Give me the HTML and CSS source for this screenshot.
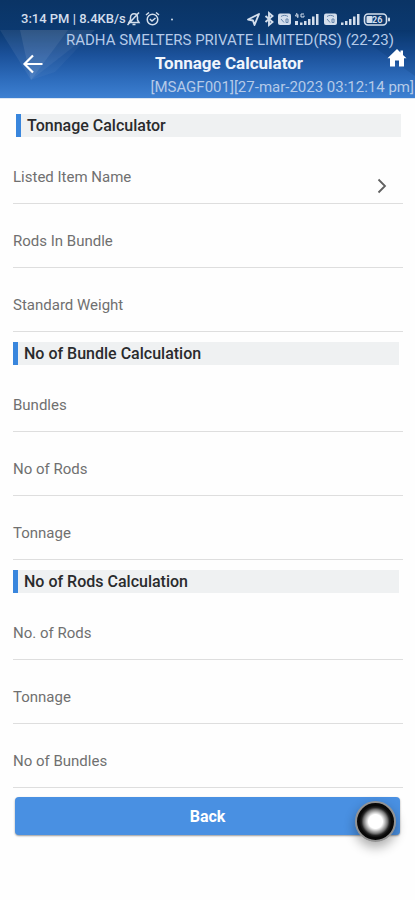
FILE: index.html
```html
<!DOCTYPE html>
<html lang="en">
<head>
<meta charset="utf-8">
<meta name="viewport" content="width=device-width, initial-scale=1">
<title>Tonnage Calculator</title>
<link rel="stylesheet" href="styles.css">
</head>
<body>
<header class="header">
  <svg class="facets" viewBox="0 0 415 68" preserveAspectRatio="none" aria-hidden="true">
    <path d="M0 0H68L31 50Z" fill="#fff" opacity=".07"/>
    <path d="M20 0H95L31 50Z" fill="#fff" opacity=".09"/>
    <path d="M31 50L95 0L55 42Z" fill="#fff" opacity=".04"/>
    <path d="M350 0H415V46Z" fill="#03295c" opacity=".14"/>
  </svg>
  <div class="status">
    <span class="status-text">3:14 PM | 8.4KB/s</span>
    <svg class="icon-alerts" width="50" height="16" viewBox="0 0 50 16" fill="none" stroke="currentColor" stroke-width="1.5" aria-hidden="true">
      <path d="M3 11.500L4.500 9V6.500C4.500 4 6 2.800 8 2.800S11.500 4 11.500 6.500V9L13 11.500ZM6.500 13.500H9.500M1.500 14L13 1.500"/>
      <circle cx="26.500" cy="8.500" r="5.300"/>
      <path d="M20 4L23 1.500M33 4L30 1.500M23.800 8L26 10L29.500 7"/>
      <circle cx="46" cy="8.500" r="1" fill="currentColor" stroke="none"/>
    </svg>
    <svg class="icon-system" width="150" height="18" viewBox="0 0 150 18" fill="currentColor" aria-hidden="true">
      <path d="M3 9.500L14 4L9.500 15L8 10.500Z" fill="none" stroke="currentColor" stroke-width="1.900" stroke-linejoin="round"/>
      <path d="M20.500 6L27.500 12L24 15V3L27.500 6L20.500 12" fill="none" stroke="currentColor" stroke-width="1.900"/>
      <rect x="33" y="3.500" width="13" height="11.500" rx="2"/>
      <path d="M36 6.500C38 5 41 5 43 6.500M36 9L39 12.500M41 9H43V12.500H41Z" fill="none" stroke="#6484aa"/>
      <path d="M52 3L50.500 6H53.500M52.800 4V8M59 4H56V7H59V5.500" fill="none" stroke="currentColor"/>
      <path d="M50 11H53V15H50ZM55 12.500H57.500V15H55ZM59 11H61.500V15H59ZM63 9H65.500V15H63ZM67 6.500H69.500V15H67ZM71 4H73.500V15H71Z"/>
      <rect x="79" y="3.500" width="13" height="11.500" rx="2"/>
      <path d="M82 6.500C84 5 87 5 89 6.500M82 9L85 12.500M87 9H89V12.500H87Z" fill="none" stroke="#6484aa"/>
      <path d="M96 12.500H98.500V15H96ZM100 11H102.500V15H100ZM104 9H106.500V15H104ZM108 6.500H110.500V15H108ZM112 4H114.500V15H112Z"/>
      <rect x="119.500" y="4" width="22" height="11" rx="3.500" fill="none" stroke="currentColor" stroke-width="1.600"/>
      <rect x="121.500" y="6" width="6" height="7" rx="1"/>
      <rect x="143" y="7.500" width="2" height="4" rx="1"/>
      <text x="127" y="12.500" class="battery-text">26</text>
    </svg>
  </div>
  <div class="titles">
    <p class="company">RADHA SMELTERS PRIVATE LIMITED(RS) (22-23)</p>
    <h1 class="title">Tonnage Calculator</h1>
    <p class="session">[MSAGF001][27-mar-2023 03:12:14 pm]</p>
  </div>
  <button class="nav-back" type="button" aria-label="Go back">
    <svg width="22" height="22" viewBox="0 0 22 22" fill="none" stroke="currentColor" stroke-width="2.200"><path d="M20.500 11H3M11 2.500L2.500 11L11 19.500"/></svg>
  </button>
  <a class="nav-home" href="#" aria-label="Home">
    <svg width="20" height="18" viewBox="0 0 20 18" fill="currentColor"><path d="M10 0L0.500 9.300H3V17.500H8V11.500H12V17.500H17V9.300H19.500L16 5.900V1.500H13.500V3.400Z"/></svg>
  </a>
</header>
<main class="main">
  <form class="form">
    <h2 class="section">Tonnage Calculator</h2>
    <div class="field">
      <label for="item">Listed Item Name</label><input id="item" type="text">
      <button class="pick" type="button" aria-label="Choose item">
        <svg width="10" height="16" viewBox="0 0 10 16" fill="none" stroke="currentColor" stroke-width="1.800"><path d="M1.500 1.500L8 8L1.500 14.500"/></svg>
      </button>
    </div>
    <div class="field"><label for="rods-in">Rods In Bundle</label><input id="rods-in" type="text"></div>
    <div class="field"><label for="weight">Standard Weight</label><input id="weight" type="text"></div>
    <h2 class="section">No of Bundle Calculation</h2>
    <div class="field"><label for="bundles">Bundles</label><input id="bundles" type="text"></div>
    <div class="field"><label for="rods">No of Rods</label><input id="rods" type="text"></div>
    <div class="field"><label for="tonnage">Tonnage</label><input id="tonnage" type="text"></div>
    <h2 class="section">No of Rods Calculation</h2>
    <div class="field"><label for="rods2">No. of Rods</label><input id="rods2" type="text"></div>
    <div class="field"><label for="tonnage2">Tonnage</label><input id="tonnage2" type="text"></div>
    <div class="field"><label for="bundles2">No of Bundles</label><input id="bundles2" type="text"></div>
    <div class="actions">
      <button class="back" type="button">Back</button>
      <span class="touch" aria-hidden="true"></span>
    </div>
  </form>
</main>
</body>
</html>
```
FILE: styles.css
```css
* { box-sizing: border-box; }
body {
  margin: 0;
  background: #fefefe;
  color: #2a2b2d;
  font-family: Roboto, "Liberation Sans", sans-serif;
}
button, input { font: inherit; color: inherit; border: 0; padding: 0; background: none; }
h1, h2, p { margin: 0; }
svg { display: block; }

.header {
  position: relative;
  border-bottom: 1px solid #dce6f3;
  background: linear-gradient(#0a3465 0, #0b3970 30px, #1b519a 55px, #2e6dbd 80px, #3d80d2 98px);
  color: #fff;
  overflow: hidden;
}
.facets { position: absolute; left: 0; top: 30px; width: 100%; height: 68px; }
.status {
  position: relative;
  display: flex;
  align-items: center;
  height: 30px;
  padding: 8px 20px 0 21px;
  color: #d3deec;
}
.status-text { font: 500 13px/16px Roboto, sans-serif; white-space: nowrap; }
.icon-system { margin-left: auto; }
.battery-text { font: 700 9px Roboto, sans-serif; }
.titles { position: relative; white-space: nowrap; }
.company, .session { color: #b5cae8; font-size: 15px; }
.company { padding-left: 66px; line-height: 21px; }
.title { padding-left: 155px; font-size: 17px; line-height: 25px; font-weight: 700; color: #f0f5fc; }
.session { padding-right: 1px; line-height: 22px; text-align: right; }
.nav-back { position: absolute; left: 22px; top: 53px; color: #fff; }
.nav-home { position: absolute; right: 8px; top: 49px; color: #fff; }

.main { padding: 5px 12px 60px 13px; }
.section {
  height: 23px;
  margin: 10px 4px 3px 0;
  padding-left: 6px;
  border-left: 5px solid #3986dd;
  background: #eff1f2;
  font-size: 16px;
  line-height: 23px;
  font-weight: 500;
}
.section:first-child { margin-left: 3px; margin-right: 2px; }
.field {
  display: flex;
  height: 64px;
  padding-top: 27px;
  border-bottom: 1px solid #dedede;
}
.field label { font-size: 15px; line-height: 20px; color: #707070; }
.field input { flex: 1; min-width: 0; height: 20px; outline: 0; }
.pick { align-self: flex-start; margin: 11px 16px 0 0; color: #606060; }
.actions { position: relative; margin: 9px 3px 0 2px; }
.back {
  display: block;
  width: 100%;
  height: 38px;
  border-radius: 4px;
  background: #4990e2;
  box-shadow: 0 1px 2px #0006;
  color: #fff;
  font-size: 16px;
  font-weight: 700;
}
.touch {
  position: absolute;
  right: 4px;
  top: 4px;
  width: 41px;
  height: 41px;
  border-radius: 50%;
  border: 2px solid #929292;
  background: radial-gradient(circle, #fff 0 7px, #ccc 9px, #777 12px, #252525 14px, #080808 16px);
  box-shadow: 0 5px 12px #0005;
}
```
